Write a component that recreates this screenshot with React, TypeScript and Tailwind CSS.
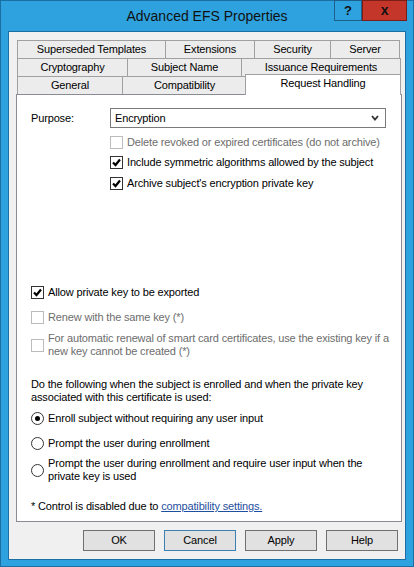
import React from 'react';

const font = "font-['Liberation_Sans',Arial,sans-serif]";

const Check = ({ checked, disabled }: { checked?: boolean; disabled?: boolean }) => (
  <div
    className={`flex h-[13px] w-[13px] shrink-0 items-center justify-center border bg-white ${
      disabled ? 'border-[#bcbcbc]' : 'border-[#333333]'
    }`}
  >
    {checked && (
      <svg width="9" height="9" viewBox="0 0 9 9">
        <path d="M1 4.5 L3.5 7 L8 1.5" fill="none" stroke="#000" strokeWidth="2.2" />
      </svg>
    )}
  </div>
);

const Radio = ({ checked }: { checked?: boolean }) => (
  <div className="flex h-[13px] w-[13px] shrink-0 items-center justify-center rounded-full border border-[#333333] bg-white">
    {checked && <div className="h-[5px] w-[5px] rounded-full bg-black" />}
  </div>
);

const Tab = ({ label, w }: { label: string; w: number }) => (
  <div
    style={{ width: w }}
    className="flex h-[18px] shrink-0 items-center justify-center border-l border-t border-r border-[#a0a0a0] bg-[#ececec] -mr-px"
  >
    {label}
  </div>
);

const Button = ({ label, active }: { label: string; active?: boolean }) => (
  <div
    className={`flex h-[21px] w-[72px] items-center justify-center border bg-[#e1e1e1] ${
      active ? 'border-[#3c7fb1]' : 'border-[#707070]'
    }`}
  >
    {label}
  </div>
);

export default function App() {
  return (
    <div className={`${font} flex h-[567px] w-[414px] flex-col border border-[#1b6fa3] bg-[#2ea2de] text-[11px] leading-[13px] tracking-[-0.15px] text-black`}>
      {/* title bar */}
      <div className="relative flex h-[30px] items-center justify-center">
        <span className="text-[14px] leading-[18px] tracking-normal text-[#111]">Advanced EFS Properties</span>
        <div className="absolute right-[6px] top-[-1px] flex">
          <div className="flex h-[21px] w-[28px] items-center justify-center border border-[#1d5f8a] text-[13px] font-bold text-[#111]">
            ?
          </div>
          <div className="flex h-[21px] w-[45px] items-center justify-center border border-[#7a1e16] bg-[#c4362a] text-[14px] font-bold text-[#111]">
            x
          </div>
        </div>
      </div>

      {/* client area */}
      <div className="mx-[7px] mb-[6px] flex flex-1 flex-col border border-[#1b6fa3] bg-[#f0f0f0]">
        <div className="flex flex-col pl-[7px] pt-[8px]">
          <div className="flex pl-[1px]">
            <Tab label="Superseded Templates" w={149} />
            <Tab label="Extensions" w={90} />
            <Tab label="Security" w={77} />
            <Tab label="Server" w={70} />
          </div>
          <div className="flex pl-[1px]">
            <Tab label="Cryptography" w={111} />
            <Tab label="Subject Name" w={115} />
            <Tab label="Issuance Requirements" w={160} />
          </div>
          <div className="flex h-[18px] items-end pl-[1px]">
            <Tab label="General" w={106} />
            <Tab label="Compatibility" w={125} />
            <div className="relative z-10 -mb-px ml-[-1px] flex h-[21px] w-[156px] shrink-0 items-start justify-center border-l border-t border-r border-[#a0a0a0] bg-white pt-[2px]">
              Request Handling
            </div>
          </div>

          {/* panel */}
          <div className="flex h-[428px] w-[386px] flex-col border border-[#898c95] bg-white pl-[14px]">
            <div className="mt-[13px] flex h-[20px] items-center">
              <span className="w-[79px]">Purpose:</span>
              <div className="flex h-[20px] w-[276px] items-center justify-between border border-[#7a7a7a] pl-[4px] pr-[6px]">
                <span>Encryption</span>
                <svg width="8" height="6" viewBox="0 0 8 6">
                  <path d="M1 1 L4 4.5 L7 1" fill="none" stroke="#333" strokeWidth="1.8" />
                </svg>
              </div>
            </div>
            <div className="ml-[79px] mt-[8px] flex items-center gap-[4px] text-[#6d6d6d]">
              <Check disabled />
              <span>Delete revoked or expired certificates (do not archive)</span>
            </div>
            <div className="ml-[79px] mt-[7px] flex items-center gap-[4px]">
              <Check checked />
              <span>Include symmetric algorithms allowed by the subject</span>
            </div>
            <div className="ml-[79px] mt-[8px] flex items-center gap-[4px]">
              <Check checked />
              <span>Archive subject's encryption private key</span>
            </div>

            <div className="mt-[96px] flex items-center gap-[4px]">
              <Check checked />
              <span>Allow private key to be exported</span>
            </div>
            <div className="mt-[12px] flex items-center gap-[4px] text-[#6d6d6d]">
              <Check disabled />
              <span>Renew with the same key (*)</span>
            </div>
            <div className="mt-[8px] flex items-center gap-[4px] text-[#6d6d6d]">
              <Check disabled />
              <span className="w-[345px]">
                For automatic renewal of smart card certificates, use the existing key if a new key cannot be
                created (*)
              </span>
            </div>

            <div className="mt-[20px] w-[350px]">
              Do the following when the subject is enrolled and when the private key associated with this
              certificate is used:
            </div>
            <div className="mt-[8px] flex items-center gap-[4px]">
              <Radio checked />
              <span>Enroll subject without requiring any user input</span>
            </div>
            <div className="mt-[12px] flex items-center gap-[4px]">
              <Radio />
              <span>Prompt the user during enrollment</span>
            </div>
            <div className="mt-[7px] flex items-center gap-[4px]">
              <Radio />
              <span className="w-[330px]">
                Prompt the user during enrollment and require user input when the private key is used
              </span>
            </div>

            <div className="mt-[17px]">
              * Control is disabled due to{' '}
              <span className="text-[#1f4fa0] underline">compatibility settings.</span>
            </div>
          </div>
        </div>

        {/* buttons */}
        <div className="mt-[8px] flex justify-end gap-[9px] pr-[7px]">
          <Button label="OK" />
          <Button label="Cancel" active />
          <Button label="Apply" />
          <Button label="Help" />
        </div>
      </div>
    </div>
  );
}
